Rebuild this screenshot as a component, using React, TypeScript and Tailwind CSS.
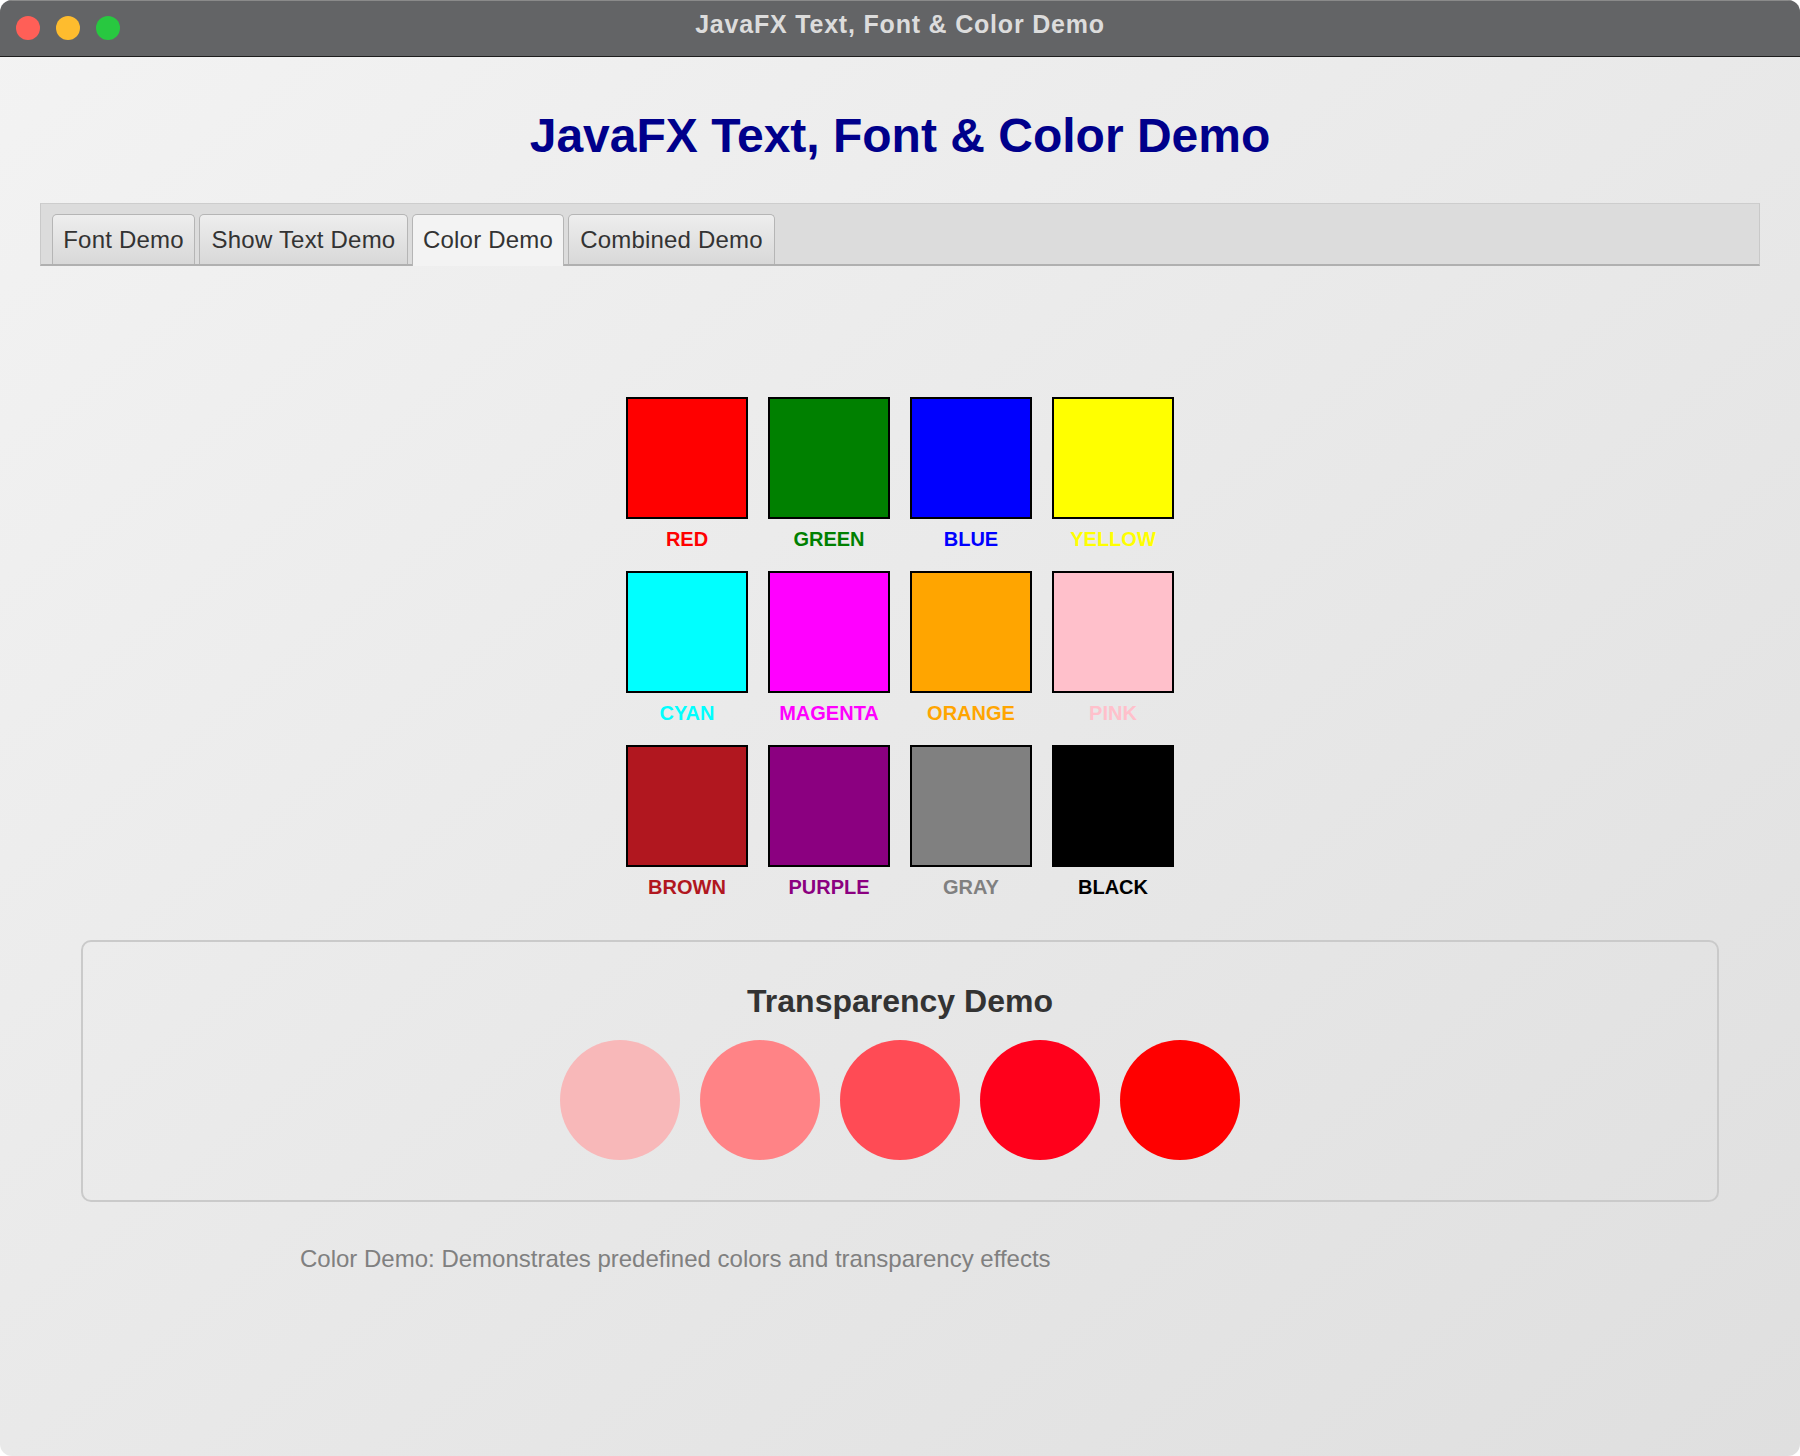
import { useState } from 'react'

const SWATCHES = [
  { name: 'RED', color: '#ff0000' },
  { name: 'GREEN', color: '#008000' },
  { name: 'BLUE', color: '#0000ff' },
  { name: 'YELLOW', color: '#ffff00' },
  { name: 'CYAN', color: '#00ffff' },
  { name: 'MAGENTA', color: '#ff00ff' },
  { name: 'ORANGE', color: '#ffa500' },
  { name: 'PINK', color: '#ffc0cb' },
  { name: 'BROWN', color: '#b1171f' },
  { name: 'PURPLE', color: '#8b0080' },
  { name: 'GRAY', color: '#808080' },
  { name: 'BLACK', color: '#000000' },
]

// red at rising opacity, as it shows on the grey pane
const CIRCLES = ['#f8b8b9', '#ff8386', '#ff4b55', '#ff001b', '#ff0000']

const TABS = [
  { label: 'Font Demo', width: 'w-[143px]' },
  { label: 'Show Text Demo', width: 'w-[209px]' },
  { label: 'Color Demo', width: 'w-[152px]' },
  { label: 'Combined Demo', width: 'w-[207px]' },
]

function TitleBar() {
  return (
    <div className="relative flex h-[57px] items-center justify-center border-b border-[#1e1e1e] border-t border-t-[#8a8a8a] bg-[#636466] pb-[8px]">
      <div className="absolute left-[16px] top-[15px] flex gap-[16px]">
        <span className="h-[24px] w-[24px] rounded-full bg-[#ff5f57]" />
        <span className="h-[24px] w-[24px] rounded-full bg-[#febc2e]" />
        <span className="h-[24px] w-[24px] rounded-full bg-[#28c840]" />
      </div>
      <span className="text-[25px] font-bold leading-[25px] tracking-[0.8px] text-[#dcdcdc]">
        JavaFX Text, Font &amp; Color Demo
      </span>
    </div>
  )
}

function TabHeader({ active, onSelect }: { active: number; onSelect: (i: number) => void }) {
  return (
    <div className="mx-[40px] mt-[39px] flex h-[63px] items-end gap-[4px] border-x border-t border-x-[#c9c9c9] border-t-[#cdcdcd] border-b-2 border-b-[#b0b0b0] bg-[#dcdcdc] pl-[11px]">
      {TABS.map((tab, i) =>
        i === active ? (
          <button
            key={tab.label}
            onClick={() => onSelect(i)}
            className={`relative -mb-[2px] h-[52px] ${tab.width} rounded-t-[5px] border-x border-t border-[#b5b5b5] bg-[#f3f3f3] pb-[2px] text-center text-[24px] leading-[28px] tracking-[0.2px] text-[#333333]`}
          >
            {tab.label}
          </button>
        ) : (
          <button
            key={tab.label}
            onClick={() => onSelect(i)}
            className={`h-[50px] ${tab.width} rounded-t-[5px] border-x border-t border-[#b5b5b5] bg-linear-to-b from-[#eeeeee] to-[#d8d8d8] text-center text-[24px] leading-[28px] tracking-[0.2px] text-[#333333]`}
          >
            {tab.label}
          </button>
        ),
      )}
    </div>
  )
}

function SwatchGrid() {
  return (
    <div className="mt-[131px] grid grid-cols-[repeat(4,122px)] justify-center gap-[20px]">
      {SWATCHES.map((s) => (
        <div key={s.name} className="flex flex-col items-center gap-[8px]">
          <div className="h-[122px] w-[122px] border-2 border-black" style={{ backgroundColor: s.color }} />
          <span className="text-[20px] font-bold leading-[24px]" style={{ color: s.color }}>
            {s.name}
          </span>
        </div>
      ))}
    </div>
  )
}

function TransparencyBox() {
  return (
    <div className="mx-[81px] mt-[41px] flex flex-col items-center rounded-[10px] border-2 border-[#cacaca] py-[40px]">
      <h2 className="text-[32px] font-bold leading-[38px] text-[#333333]">Transparency Demo</h2>
      <div className="mt-[20px] flex gap-[20px]">
        {CIRCLES.map((c) => (
          <div key={c} className="h-[120px] w-[120px] rounded-full" style={{ backgroundColor: c }} />
        ))}
      </div>
    </div>
  )
}

export default function App() {
  const [active, setActive] = useState(2)

  return (
    <div className="h-[1456px] w-[1800px] bg-white font-['Liberation_Sans',Arial,sans-serif]">
      <div className="flex h-full flex-col overflow-hidden rounded-[12px] bg-linear-to-br from-[#f3f3f3] to-[#dfdfdf]">
        <TitleBar />
        <h1 className="pt-[51px] text-center text-[48px] font-bold leading-[56px] text-[#00008b]">
          JavaFX Text, Font &amp; Color Demo
        </h1>
        <TabHeader active={active} onSelect={setActive} />
        <SwatchGrid />
        <TransparencyBox />
        <p className="ml-[300px] mt-[43px] text-[24px] leading-[28px] text-[#808080]">
          Color Demo: Demonstrates predefined colors and transparency effects
        </p>
      </div>
    </div>
  )
}
